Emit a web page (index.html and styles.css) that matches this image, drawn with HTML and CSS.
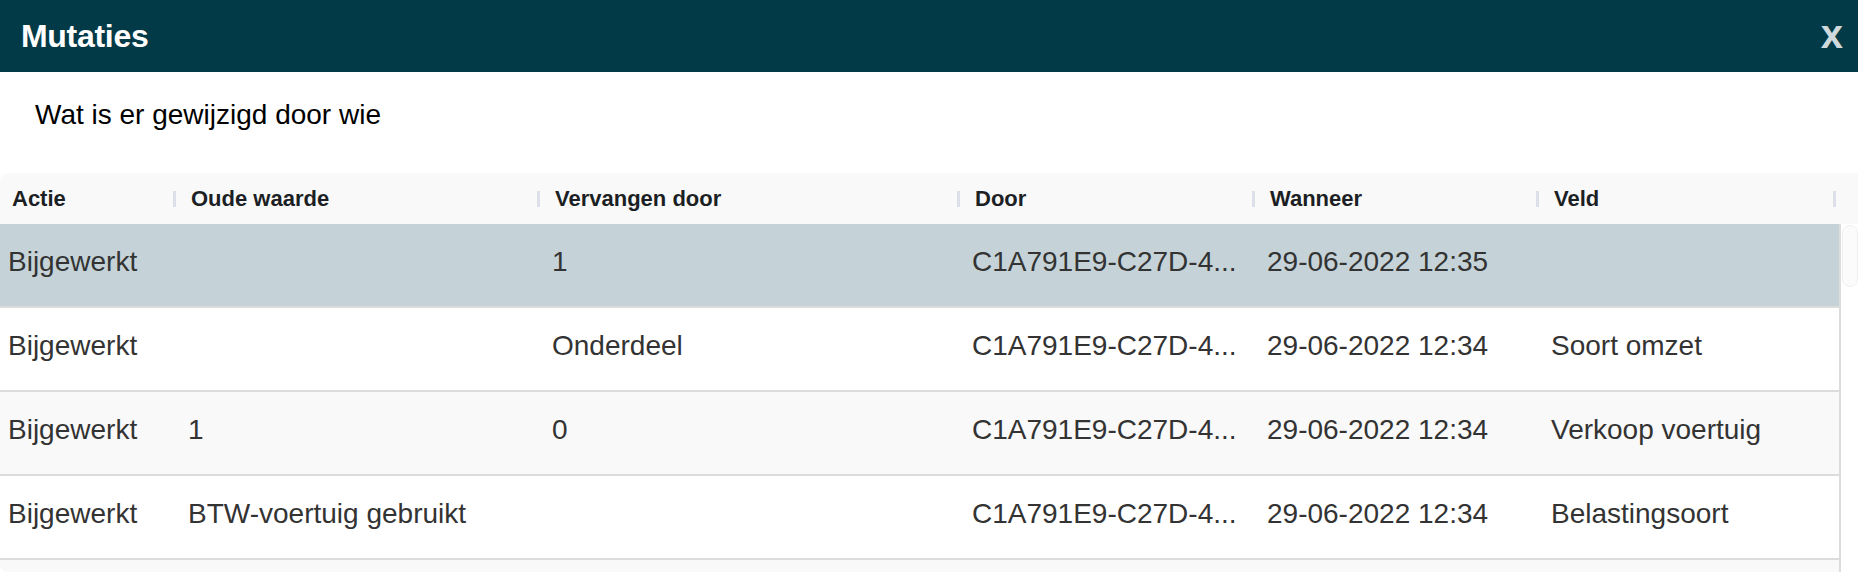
FILE: index.html
```html
<!DOCTYPE html>
<html lang="nl">
<head>
<meta charset="utf-8">
<title>Mutaties</title>
<link rel="stylesheet" href="styles.css">
</head>
<body>
<div class="dialog">
  <header class="titlebar">
    <h1 class="title">Mutaties</h1>
    <span class="close">x</span>
  </header>
  <p class="intro">Wat is er gewijzigd door wie</p>
  <div class="grid">
    <div class="grid-head">
      <div class="th">Actie</div>
      <div class="th">Oude waarde</div>
      <div class="th">Vervangen door</div>
      <div class="th">Door</div>
      <div class="th">Wanneer</div>
      <div class="th">Veld</div>
      <div class="th-fill"></div>
    </div>
    <div class="grid-body">
      <div class="rows">
        <div class="row selected">
          <div class="td">Bijgewerkt</div>
          <div class="td"></div>
          <div class="td">1</div>
          <div class="td">C1A791E9-C27D-4...</div>
          <div class="td">29-06-2022 12:35</div>
          <div class="td"></div>
        </div>
        <div class="row">
          <div class="td">Bijgewerkt</div>
          <div class="td"></div>
          <div class="td">Onderdeel</div>
          <div class="td">C1A791E9-C27D-4...</div>
          <div class="td">29-06-2022 12:34</div>
          <div class="td">Soort omzet</div>
        </div>
        <div class="row alt">
          <div class="td">Bijgewerkt</div>
          <div class="td">1</div>
          <div class="td">0</div>
          <div class="td">C1A791E9-C27D-4...</div>
          <div class="td">29-06-2022 12:34</div>
          <div class="td">Verkoop voertuig</div>
        </div>
        <div class="row">
          <div class="td">Bijgewerkt</div>
          <div class="td">BTW-voertuig gebruikt</div>
          <div class="td"></div>
          <div class="td">C1A791E9-C27D-4...</div>
          <div class="td">29-06-2022 12:34</div>
          <div class="td">Belastingsoort</div>
        </div>
        <div class="row alt">
          <div class="td"></div>
          <div class="td"></div>
          <div class="td"></div>
          <div class="td"></div>
          <div class="td"></div>
          <div class="td"></div>
        </div>
      </div>
      <div class="scrollbar"><div class="thumb"></div></div>
    </div>
  </div>
</div>
</body>
</html>
```
FILE: styles.css
```css
html, body {
  margin: 0;
  padding: 0;
  background: #ffffff;
}

body {
  font-family: "Liberation Sans", Arial, Helvetica, sans-serif;
  width: 1858px;
  height: 584px;
  overflow: hidden;
}

.dialog {
  display: flex;
  flex-direction: column;
}

.titlebar {
  height: 72px;
  background: #023a47;
  display: flex;
  align-items: center;
  justify-content: space-between;
  padding: 0 15px 0 21px;
}

.title {
  margin: 0;
  color: #ffffff;
  font-size: 32px;
  font-weight: bold;
  letter-spacing: -0.3px;
}

.close {
  color: #cfd9dc;
  font-size: 40px;
  font-weight: bold;
  line-height: 1;
  margin-top: -4px;
}

.intro {
  margin: 0;
  padding: 27px 0 42px 35px;
  font-size: 28px;
  line-height: 32px;
  color: #000000;
}

.grid {
  display: flex;
  flex-direction: column;
}

.grid-head {
  display: grid;
  grid-template-columns: 180px 364px 420px 295px 284px 297px 1fr;
  height: 51px;
  background: #f9f9fa;
  border-top-left-radius: 8px;
}

.th {
  position: relative;
  display: flex;
  align-items: center;
  padding-left: 11px;
  font-size: 22px;
  font-weight: bold;
  color: #1c1f23;
}

.th:first-child {
  padding-left: 12px;
}

.th::after {
  content: "";
  position: absolute;
  right: 4px;
  top: 18px;
  width: 3px;
  height: 16px;
  background: #dde0e8;
}

.grid-body {
  display: flex;
  height: 348px;
  overflow: hidden;
}

.rows {
  width: 1840px;
  display: flex;
  flex-direction: column;
  border-bottom-left-radius: 8px;
  overflow: hidden;
}

.row {
  display: grid;
  grid-template-columns: 180px 364px 420px 295px 284px 297px;
  height: 82px;
  flex: none;
  border-bottom: 2px solid #dcdcdc;
  background: #ffffff;
}

.row.alt {
  background: #f9f9f9;
}

.row.selected {
  background: #c5d3d8;
}

.td {
  display: flex;
  align-items: center;
  padding: 0 0 7px 8px;
  font-size: 28px;
  color: #333333;
  white-space: nowrap;
  overflow: hidden;
}

.scrollbar {
  width: 16px;
  border-left: 2px solid #dcdcdc;
  background: #ffffff;
  padding: 1px 0 0 1px;
}

.thumb {
  height: 60px;
  border-radius: 9px;
  background: #fbfbfb;
  border: 1px solid #f0f0f0;
}
```
